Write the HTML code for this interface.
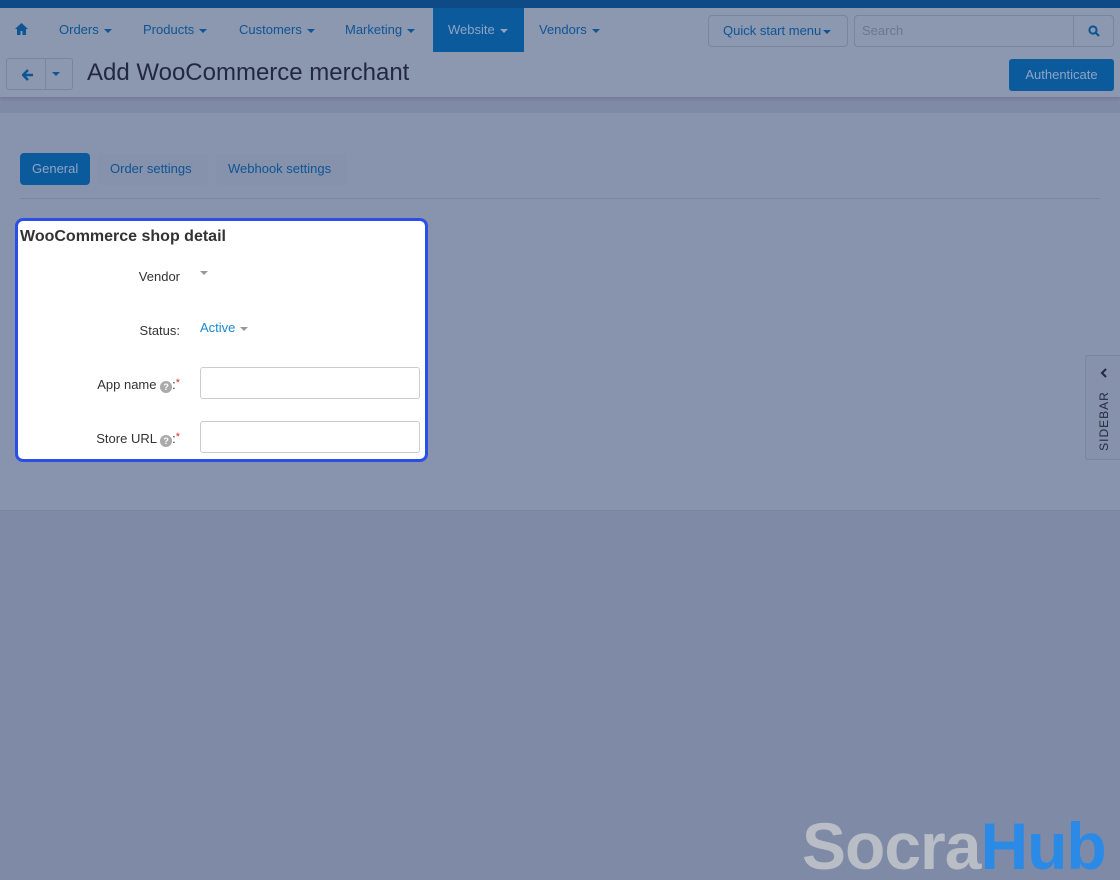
<!DOCTYPE html>
<html style="overflow:hidden;width:1120px;height:880px"><head><meta charset="utf-8"><style>
*{box-sizing:border-box;margin:0;padding:0}
body{width:1120px;height:880px;background:#7f8aa6;font-family:"Liberation Sans",sans-serif;position:relative;overflow:hidden;font-size:13px}
.topbar{position:absolute;left:0;top:0;width:1120px;height:8px;background:#0e4a86}
.nav{position:absolute;left:0;top:8px;width:1120px;height:44px;background:#8c97b0}
.nav a{position:absolute;top:0;height:44px;line-height:44px;color:#0d5594;font-size:13px}
.car{display:inline-block;width:0;height:0;border-left:4px solid transparent;border-right:4px solid transparent;border-top:4px solid currentColor;vertical-align:middle;margin-left:5px}
.hdr{position:absolute;left:0;top:52px;width:1120px;height:45px;background:#8c97b0;box-shadow:0 2px 3px rgba(0,0,0,.1)}
.content{position:absolute;left:0;top:113px;width:1120px;height:398px;background:#8893ad;border-bottom:1px solid #7a86a0}
.tab{position:absolute;top:153px;height:32px;line-height:32px;border-radius:4px;font-size:13px;color:#0d5594;background:#8691ab;padding:0 12px}
.panel{position:absolute;left:15px;top:218px;width:413px;height:244px;background:#fff;border:3px solid #2a4fe8;border-radius:8px}
.lbl{position:absolute;right:245px;font-size:13px;color:#333;text-align:right}
.inp{position:absolute;left:182px;width:220px;height:32px;border:1px solid #ccc;border-radius:3px}
.q{display:inline-block;width:12px;height:12px;border-radius:50%;background:#aaa;color:#fff;font-size:9px;line-height:12px;text-align:center;font-weight:bold;vertical-align:-1px}
</style></head><body>
<div class="topbar"></div>
<div class="nav">
<a style="left:15px"><svg width="13" height="12" viewBox="0 0 13 12" style="vertical-align:-1px"><path d="M6.5 0L0 6h2v6h3.5V8h2v4H11V6h2z" fill="#0d5594"/></svg></a>
<a style="left:59px">Orders<span class="car"></span></a>
<a style="left:143px">Products<span class="car"></span></a>
<a style="left:239px">Customers<span class="car"></span></a>
<a style="left:345px">Marketing<span class="car"></span></a>
<a style="left:433px;width:91px;background:#0b5a9b;color:#8fa4c4;padding-left:15px">Website<span class="car"></span></a>
<a style="left:539px">Vendors<span class="car"></span></a>
<div style="position:absolute;left:708px;top:7px;width:140px;height:32px;border:1px solid #7884a0;border-radius:4px;color:#0d5594;line-height:30px;padding-left:14px;font-size:13px">Quick start menu<span class="car" style="margin-left:2px"></span></div>
<div style="position:absolute;left:854px;top:7px;width:260px;height:32px;border:1px solid #7884a0;border-radius:4px;color:#6c7890;line-height:30px;padding-left:7px;font-size:13px">Search<div style="position:absolute;right:0;top:0;width:40px;height:30px;border-left:1px solid #7884a0"><svg width="12" height="12" viewBox="0 0 12 12" style="position:absolute;left:14px;top:9px"><circle cx="5" cy="5" r="3.6" fill="none" stroke="#0d5594" stroke-width="2"/><path d="M7.5 7.5L11 11" stroke="#0d5594" stroke-width="2.2"/></svg></div></div>
</div>
<div class="hdr">
<div style="position:absolute;left:6px;top:6px;width:67px;height:32px;border:1px solid #7884a0;border-radius:3px">
<div style="position:absolute;left:38px;top:0;height:30px;border-left:1px solid #7884a0"></div>
<svg width="12" height="12" viewBox="0 0 12 12" style="position:absolute;left:15px;top:10px"><path d="M6 1L1 6l5 5M1 6h10" stroke="#0d5594" stroke-width="2.4" fill="none"/></svg>
<span class="car" style="position:absolute;left:45px;top:13px;color:#0d5594;margin:0"></span></div>
<div style="position:absolute;left:87px;top:7px;font-size:24px;color:#1f2a40">Add WooCommerce merchant</div>
<div style="position:absolute;left:1009px;top:7px;width:105px;height:32px;background:#0b5a9b;border-radius:3px;color:#8fa4c4;line-height:32px;text-align:center;font-size:13px">Authenticate</div>
</div>
<div class="content">
<div style="position:absolute;left:20px;top:85px;width:1080px;border-top:1px solid #7a86a0"></div>
</div>
<div class="tab" style="left:20px;width:70px;background:#0b5a9b;color:#8fa4c4">General</div>
<div class="tab" style="left:98px;width:110px">Order settings</div>
<div class="tab" style="left:216px;width:131px">Webhook settings</div>
<div class="panel">
<div style="position:absolute;left:2px;top:7px;font-size:16px;font-weight:bold;color:#333">WooCommerce shop detail</div>
<div class="lbl" style="top:48px">Vendor</div>
<span class="car" style="position:absolute;left:182px;top:50px;color:#999;margin:0"></span>
<div class="lbl" style="top:102px">Status:</div>
<div style="position:absolute;left:182px;top:99px;color:#1a8ad0;font-size:13px">Active<span class="car" style="color:#999"></span></div>
<div class="lbl" style="top:156px">App name <span class="q">?</span>:<span style="color:#d33;vertical-align:3px;font-size:11px">*</span></div>
<div class="inp" style="top:146px"></div>
<div class="lbl" style="top:210px">Store URL <span class="q">?</span>:<span style="color:#d33;vertical-align:3px;font-size:11px">*</span></div>
<div class="inp" style="top:200px"></div>
</div>
<div style="position:absolute;left:1085px;top:355px;width:40px;height:105px;border:1px solid #7884a0;border-radius:3px;background:#8691ab">
<svg width="10" height="10" viewBox="0 0 10 10" style="position:absolute;left:13px;top:12px"><path d="M7 1L3 5l4 4" stroke="#1f2a40" stroke-width="2" fill="none"/></svg>
<div style="position:absolute;left:-14px;top:58px;transform:rotate(-90deg);font-size:12px;letter-spacing:1px;color:#1f2a40;width:64px;text-align:center">SIDEBAR</div>
</div>
<div style="position:absolute;left:802px;top:806px;height:74px;overflow:hidden;font-size:66px;line-height:80px;font-weight:bold;letter-spacing:-1px;white-space:nowrap"><span style="color:#b9bdc6">Socra</span><span style="color:#2a8ae6">Hub</span></div>
</body></html>
